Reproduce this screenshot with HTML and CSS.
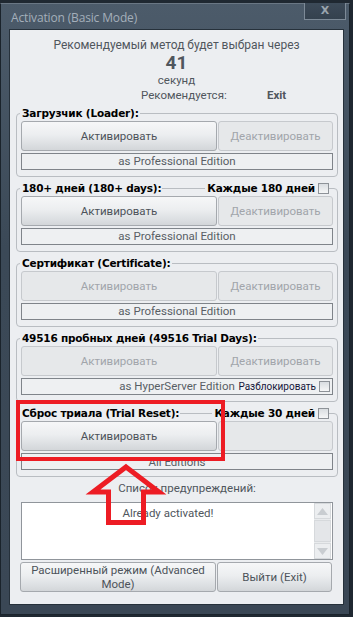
FILE: index.html
```html
<!DOCTYPE html>
<html lang="ru">
<head>
  <meta charset="UTF-8" />
  <title>Activation (Basic Mode)</title>
  <link rel="stylesheet" href="styles.css">
</head>
<body>
  <div class="window">
    <div class="titlebar">
      <span class="title">Activation (Basic Mode)</span>
      <span class="close">X</span>
    </div>

    <div class="client">
      <!-- COUNTDOWN -->
      <div class="head">
        <div class="line">Рекомендуемый метод будет выбран через</div>
        <div class="count">41</div>
        <div class="line small">секунд</div>
        <div class="recommend">
          <span class="rec-label">Рекомендуется:</span>
          <span class="rec-value">Exit</span>
        </div>
      </div>

      <!-- METHODS -->
      <div class="groups">
        <div class="group">
          <div class="group-head">
            <span class="group-title">Загрузчик (Loader):</span>
          </div>
          <div class="btn-row">
            <div class="btn wide">Активировать</div>
            <div class="btn narrow off">Деактивировать</div>
          </div>
          <div class="edition">as Professional Edition</div>
        </div>

        <div class="group">
          <div class="group-head">
            <span class="group-title">180+ дней (180+ days):</span>
            <span class="group-check">Каждые 180 дней <i class="box"></i></span>
          </div>
          <div class="btn-row">
            <div class="btn wide">Активировать</div>
            <div class="btn narrow off">Деактивировать</div>
          </div>
          <div class="edition">as Professional Edition</div>
        </div>

        <div class="group">
          <div class="group-head">
            <span class="group-title">Сертификат (Certificate):</span>
          </div>
          <div class="btn-row">
            <div class="btn wide off">Активировать</div>
            <div class="btn narrow off">Деактивировать</div>
          </div>
          <div class="edition">as Professional Edition</div>
        </div>

        <div class="group">
          <div class="group-head">
            <span class="group-title">49516 пробных дней (49516 Trial Days):</span>
          </div>
          <div class="btn-row">
            <div class="btn wide off">Активировать</div>
            <div class="btn narrow off">Деактивировать</div>
          </div>
          <div class="edition">as HyperServer Edition
            <span class="unlock">Разблокировать <i class="box"></i></span>
          </div>
        </div>

        <div class="group">
          <div class="group-head">
            <span class="group-title">Сброс триала (Trial Reset):</span>
            <span class="group-check">Каждые 30 дней <i class="box"></i></span>
          </div>
          <div class="btn-row">
            <div class="btn wide">Активировать</div>
            <div class="btn narrow off"></div>
          </div>
          <div class="edition low">All Editions</div>
        </div>
      </div>

      <!-- WARNINGS -->
      <div class="warn-label">Список предупреждений:</div>
      <div class="log">
        <div class="log-text">Already activated!</div>
        <div class="scroll">
          <div class="sb-btn"><svg width="11" height="7" viewBox="0 0 11 7"><path d="M5.5 0 L11 7 L0 7 Z" fill="#c9cdd1"/></svg></div>
          <div class="sb-track"></div>
          <div class="sb-btn"><svg width="11" height="7" viewBox="0 0 11 7"><path d="M0 0 L11 0 L5.5 7 Z" fill="#c9cdd1"/></svg></div>
        </div>
      </div>

      <div class="btn-row bottom">
        <div class="btn wide two">Расширенный режим (Advanced<br>Mode)</div>
        <div class="btn narrow">Выйти (Exit)</div>
      </div>
    </div>
  </div>

  <!-- ANNOTATION -->
  <svg class="mark" width="353" height="617" viewBox="0 0 353 617">
    <rect x="18" y="402" width="205" height="57" fill="none" stroke="#ed1c24" stroke-width="4"/>
    <path d="M126 467 L159 492 L143.5 492 L143.5 522.5 L108.5 522.5 L108.5 492 L93 492 Z"
          fill="none" stroke="#ed1c24" stroke-width="5" stroke-linejoin="miter"/>
  </svg>
</body>
</html>
```

FILE: styles.css
```css
/* ---------- PAGE ---------- */
*{margin:0;padding:0;box-sizing:border-box;}
html,body{
  width:353px;height:617px;
  overflow:hidden;
  background:#1f2831;
  font-family:Roboto,'Liberation Sans',sans-serif;
  font-size:11px;
  color:#50565d;
}
body{position:relative;}

/* ---------- WINDOW FRAME ---------- */
.window{
  width:350px;height:612px;
  margin-top:3px;
  padding:0 5px 9px 8px;
  background:linear-gradient(#4c5b6a,#3b4957 40%,#3a4755);
  border:1px solid #1a232b;
  border-top-color:#6a7784;
}
.titlebar{
  height:25px;
  display:flex;justify-content:space-between;align-items:flex-start;
}
.title{
  margin:5px 0 0 2px;
  font-family:'Open Sans','Liberation Sans',sans-serif;
  font-size:12px;
  color:#a4afba;
  letter-spacing:-.15px;
}
.close{
  width:42px;height:17px;
  margin:-1px -2px 0 0;
  border:1px solid #7d8a97;
  border-top:none;
  background:linear-gradient(#3c4a58,#34414e);
  color:#9aa4ae;
  font-family:'DejaVu Sans',sans-serif;
  font-weight:bold;font-size:11px;
  text-align:center;line-height:15px;
}

/* ---------- CLIENT AREA ---------- */
.client{
  height:576px;
  background:#eceef1;
  border:1px solid #26313b;
}
.head{padding-top:8px;text-align:center;}
.line{line-height:15px;font-size:12px;}
.line.small{line-height:14px;font-size:11.5px;}
.count{
  line-height:20px;height:20px;
  font-size:19px;font-weight:bold;color:#50565d;
}
.recommend{
  display:flex;line-height:16px;
  padding-left:131px;text-align:left;
}
.rec-label{width:126px;font-size:11.5px;}
.rec-value{font-weight:bold;font-size:11.5px;color:#50565d;}

/* ---------- GROUP BOXES ---------- */
.groups{padding:10px 5px 0 6px;}
.group{
  height:64px;
  border:1px solid #b9bdc2;
  border-radius:4px;
  margin-bottom:11px;
}
.group:last-child{margin-bottom:0;}
.group-head{
  height:15px;margin-top:-8px;
  display:flex;justify-content:space-between;align-items:center;
  font-family:'DejaVu Sans',sans-serif;
  font-weight:bold;font-size:10.5px;color:#000;
  letter-spacing:-.2px;
}
.group-title{background:#eceef1;padding:0 1px 0 2px;margin-left:3px;line-height:15px;}
.group-check{
  background:#eceef1;padding-left:2px;margin-right:8px;
  display:flex;align-items:center;gap:3px;line-height:15px;
}
.box{
  display:inline-block;width:11px;height:11px;
  border:1px solid #8d9298;
  background:linear-gradient(#d9dde1,#f5f6f7);
}

/* ---------- BUTTONS ---------- */
.btn-row{display:flex;gap:1px;padding:0 4px;}
.btn{
  height:30px;
  display:flex;align-items:center;justify-content:center;
  border:1px solid #a5a9ae;
  border-radius:3px;
  background:linear-gradient(#f6f7f8 0%,#eceef0 45%,#dcdfe2 80%,#d3d6d9 100%);
  color:#4d535a;
  font-size:11.5px;
  text-align:center;
}
.btn.wide{width:196px;}
.btn.narrow{width:115px;}
.btn.off{
  background:#e6e8ea;
  border-color:#c6c9cd;
  color:#a1a5aa;
}
.btn.two{line-height:14px;}
.edition{
  position:relative;
  height:17px;margin:2px 4px 0;
  border:1px solid #7f848a;
  background:#eef0f2;
  text-align:center;line-height:15px;
  color:#585e65;font-size:11.5px;
}
.edition.low{line-height:17px;}
.unlock{
  position:absolute;right:2px;top:1px;
  display:flex;align-items:center;gap:3px;
  font-size:10px;line-height:13px;color:#15163a;
  background:#eef0f2;padding-left:2px;
}

/* ---------- WARNINGS ---------- */
.warn-label{
  margin-top:4px;line-height:15px;
  padding-left:21px;text-align:center;font-size:11.5px;
}
.log{
  display:flex;
  width:312px;height:58px;
  margin:6px 0 2px 11px;
  border:1px solid #90959b;
  background:#fff;
}
.log-text{flex:1;text-align:center;padding-top:3px;line-height:14px;font-size:11.5px;}
.scroll{
  width:17px;margin:0 1px 0 0;
  display:flex;flex-direction:column;
  background:#e9ebed;
}
.sb-btn{
  height:16px;
  display:flex;align-items:center;justify-content:center;
  border:1px solid #d6d9dc;background:#eceef0;
}
.sb-track{flex:1;border:1px solid #d6d9dc;background:#e4e6e9;margin:1px 0;}
.bottom{padding:0 4px 0 10px;}

/* ---------- ANNOTATION OVERLAY ---------- */
.mark{position:absolute;left:0;top:0;pointer-events:none;}
```
